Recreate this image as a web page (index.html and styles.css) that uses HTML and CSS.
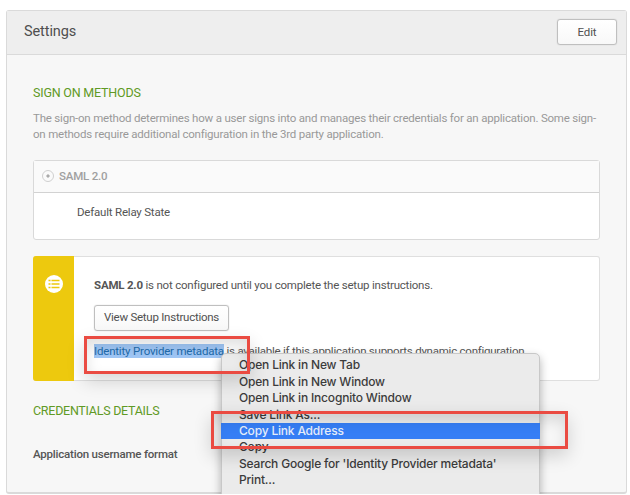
FILE: index.html
```html
<!DOCTYPE html>
<html lang="en">
<head>
<meta charset="utf-8">
<title>Settings</title>
<link rel="stylesheet" href="styles.css">
</head>
<body>
<main class="panel">
  <header class="panel-header">
    <h1>Settings</h1>
    <button class="btn btn-edit">Edit</button>
  </header>
  <div class="panel-body">
    <h2>SIGN ON METHODS</h2>
    <p class="intro">The sign-on method determines how a user signs into and manages their credentials for an application. Some sign-<br>on methods require additional configuration in the 3rd party application.</p>
    <section class="method">
      <div class="method-head"><i class="radio"></i><span>SAML 2.0</span></div>
      <div class="method-body">Default Relay State</div>
    </section>
    <section class="notice">
      <div class="notice-side">
        <svg width="18" height="18" viewBox="0 0 18 18"><circle cx="9" cy="9" r="9" fill="#fff"/><g fill="none" stroke="#edc90e"><path d="M3.5 5.5h2M3.5 9h2M3.5 12.5h2" stroke-width="1.6"/><path d="M6.5 5.5h8M6.5 9h8M6.5 12.5h8" stroke-width="1.6"/></g></svg>
      </div>
      <div class="notice-body">
        <p><b>SAML 2.0</b> is not configured until you complete the setup instructions.</p>
        <button class="btn btn-setup">View Setup Instructions</button>
        <p class="meta"><a class="selected">Identity Provider metadata</a> is available if this application supports dynamic configuration.</p>
      </div>
    </section>
    <h2 class="credentials">CREDENTIALS DETAILS</h2>
    <p class="label">Application username format</p>
  </div>
</main>
<div class="menu-clip">
  <ul class="menu">
    <li>Open Link in New Tab</li>
    <li>Open Link in New Window</li>
    <li>Open Link in Incognito Window</li>
    <li>Save Link As...</li>
    <li class="active">Copy Link Address</li>
    <li>Copy</li>
    <li>Search Google for 'Identity Provider metadata'</li>
    <li>Print...</li>
  </ul>
</div>
<div class="mark mark-link"></div>
<div class="mark mark-copy"></div>
</body>
</html>
```
FILE: styles.css
```css
* { box-sizing: border-box; }
body { margin: 0; width: 630px; height: 495px; overflow: hidden; background: #fff; color: #555; font: 11.5px/16px Roboto, sans-serif; letter-spacing: -.205px; padding: 10px 3px 0 6px; position: relative; }
h1, h2, p, ul { margin: 0; padding: 0; font-weight: 400; white-space: nowrap; }
.panel { height: 484px; border: 1px solid #dadada; border-bottom-width: 2px; border-radius: 3px; background: #f7f7f7; }
.panel-header { height: 44px; background: #eee; border-bottom: 1px solid #dadada; display: flex; align-items: center; justify-content: space-between; padding: 0 9px 1px 17px; }
h1 { font-size: 14.5px; letter-spacing: -.1px; color: #4e4e4e; }
.btn { font: inherit; letter-spacing: -.25px; color: #505050; background: linear-gradient(#fff, #f8f8f8); border: 1px solid #bfbfbf; border-radius: 3px; padding: 0 0 1px; height: 26px; white-space: nowrap; box-shadow: 0 0 1px #bbb; }
.btn-edit { width: 60px; letter-spacing: -.1px; }
.panel-body { padding: 30px 26px 0; }
h2 { font-size: 12.5px; line-height: 16px; letter-spacing: -.2px; color: #5f9a25; }
.intro { margin-top: 10px; line-height: 15.5px; color: #999; }
.method { margin-top: 18px; height: 80px; border: 1px solid #d9d9d9; border-radius: 3px; background: #fff; }
.method-head { height: 32px; border-bottom: 1px solid #d2d2d2; background: #fafafa; display: flex; align-items: center; gap: 5px; padding: 0 0 1px 8px; color: #a0a0a0; font-weight: 500; }
.radio { width: 12px; height: 12px; border: 1px solid #d0d0d0; border-radius: 50%; background: radial-gradient(circle, #aaa 1.2px, #fafafa 2px); }
.method-body { padding: 11px 0 0 43px; }
.notice { margin-top: 16px; height: 125px; display: flex; border: 1px solid #dfdfdf; border-left: 0; border-radius: 3px; background: #fff; }
.notice-side { width: 41px; margin: -1px 0; background: #edc90e; border-radius: 3px 0 0 3px; padding: 19px 0 0 12px; }
.notice-side svg { display: block; }
.notice-body { padding: 20px 0 0 20px; }
.btn-setup { display: block; width: 135px; margin-top: 12px; padding-bottom: 2px; }
.meta { margin-top: 12px; letter-spacing: -.24px; }
.selected { background: #9fc6f5; color: #216bab; letter-spacing: -.19px; }
.credentials { margin-top: 22px; letter-spacing: -.27px; }
.label { margin-top: 27px; font-weight: 500; }
.menu-clip { position: absolute; left: 180px; top: 320px; width: 400px; height: 174px; overflow: hidden; padding: 33px 0 0 41px; }
.menu { list-style: none; width: 319px; height: 160px; background: #ebebeb; border: 1px solid #c8c8c8; border-radius: 5px; padding-top: 3.4px; font: 500 12px/16.4px Inter, sans-serif; letter-spacing: -.19px; color: #3c3c3c; box-shadow: 0 4px 10px rgba(0,0,0,.3); }
.menu li { height: 16.4px; padding-left: 17px; white-space: nowrap; }
.menu .active { background: #367ef5; color: #e5edfa; margin: 0 -1px; padding-left: 18px; }
.mark { position: absolute; border: 3px solid #ea4b42; box-shadow: 0 7px 18px rgba(0,0,0,.16), inset 0 7px 14px rgba(0,0,0,.12); }
.mark-link { left: 84px; top: 336px; width: 166px; height: 38px; }
.mark-copy { left: 211px; top: 411px; width: 357px; height: 38px; }
```
